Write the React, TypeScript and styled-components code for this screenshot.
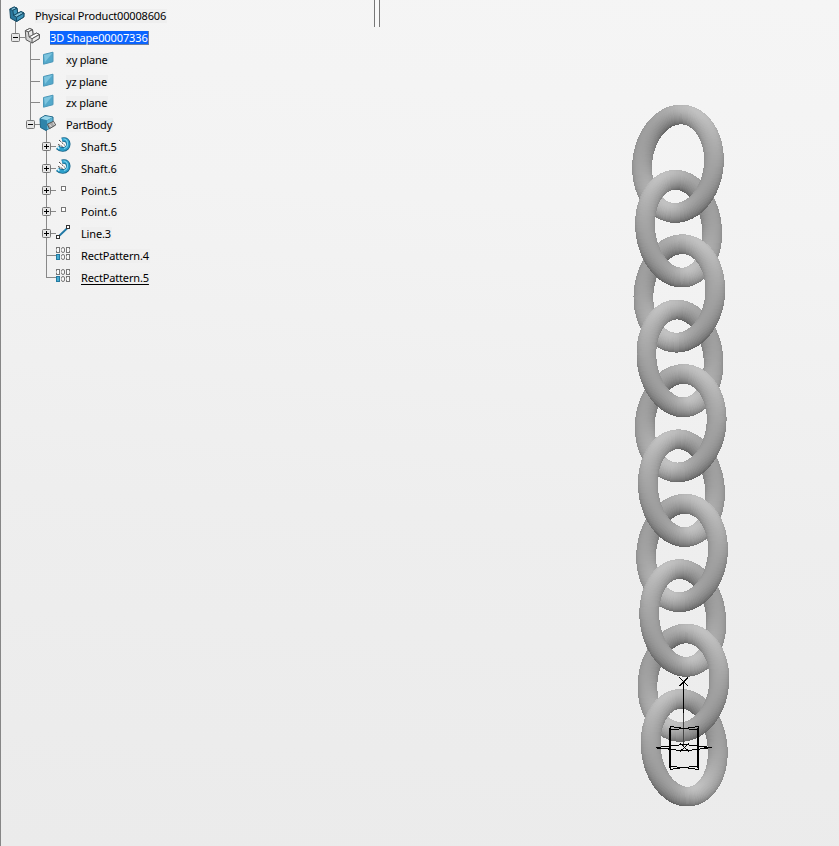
import React from 'react';
import styled, { createGlobalStyle } from 'styled-components';

const GlobalStyle = createGlobalStyle`
  html, body { margin: 0; padding: 0; overflow: hidden; }
`;

const Viewport = styled.main`
  position: relative;
  box-sizing: border-box;
  width: 839px;
  height: 846px;
  display: grid;
  grid-template-columns: 374px 5px 1fr;
  border-left: 1px solid #868686;
  overflow: hidden;
  background: linear-gradient(184deg, #f5f5f5 0%, #f3f3f3 25%, #eeeeee 60%, #ebebeb 100%);
`;

const Tree = styled.ul`
  list-style: none;
  margin: 0;
  padding: 5px 0 0;
`;

const Row = styled.li<{ $height: number }>`
  display: flex;
  align-items: flex-start;
  height: ${(p) => p.$height}px;
`;

const Gutter = styled.svg<{ $width: number }>`
  flex: none;
  display: block;
  width: ${(p) => p.$width}px;
  height: 22px;
  margin-left: -1px;
  overflow: visible;
`;

const Label = styled.span<{ $selected?: boolean; $underline?: boolean; $spacing: number }>`
  box-sizing: border-box;
  height: 14px;
  margin-top: 4px;
  padding: 0 1px 0 0;
  font: 11px/14px 'Noto Sans', 'Open Sans', sans-serif;
  letter-spacing: ${(p) => p.$spacing}px;
  white-space: nowrap;
  color: ${(p) => (p.$selected ? '#fff' : '#000')};
  background: ${(p) => (p.$selected ? '#0a64ff' : '#efefef')};
  box-shadow: ${(p) => (p.$selected ? 'inset -1px -1px 0 #6f7f9c' : 'none')};
  text-decoration: ${(p) => (p.$underline ? 'underline' : 'none')};
  text-underline-offset: 2px;
  text-decoration-skip-ink: none;
`;

const Splitter = styled.div`
  box-sizing: border-box;
  height: 27px;
  margin-left: -1px;
  border-left: 1px solid #777;
  border-right: 1px solid #777;
  background: #f8f8f8;
`;

const Scene = styled.svg`
  position: absolute;
  left: -1px;
  top: 0;
  width: 839px;
  height: 846px;
  pointer-events: none;
`;

type IconKind = 'product' | 'shape' | 'plane' | 'body' | 'shaft' | 'point' | 'line' | 'pattern';

interface Item {
  label: string;
  icon: IconKind;
  level: 0 | 1 | 2 | 3;
  height: number;
  box?: '-' | '+';
  spacing: number;
  selected?: boolean;
  underline?: boolean;
  last?: boolean;
}

const items: Item[] = [
  { label: 'Physical Product00008606', icon: 'product', level: 0, height: 22, spacing: -0.17 },
  { label: '3D Shape00007336', icon: 'shape', level: 1, height: 22, box: '-', spacing: -0.12, selected: true },
  { label: 'xy plane', icon: 'plane', level: 2, height: 22, spacing: -0.18 },
  { label: 'yz plane', icon: 'plane', level: 2, height: 21, spacing: -0.18 },
  { label: 'zx plane', icon: 'plane', level: 2, height: 22, spacing: -0.18 },
  { label: 'PartBody', icon: 'body', level: 2, height: 22, box: '-', spacing: -0.18, last: true },
  { label: 'Shaft.5', icon: 'shaft', level: 3, height: 22, box: '+', spacing: -0.02 },
  { label: 'Shaft.6', icon: 'shaft', level: 3, height: 22, box: '+', spacing: -0.02 },
  { label: 'Point.5', icon: 'point', level: 3, height: 21, box: '+', spacing: -0.02 },
  { label: 'Point.6', icon: 'point', level: 3, height: 22, box: '+', spacing: -0.02 },
  { label: 'Line.3', icon: 'line', level: 3, height: 22, box: '+', spacing: -0.15 },
  { label: 'RectPattern.4', icon: 'pattern', level: 3, height: 22, spacing: -0.15 },
  { label: 'RectPattern.5', icon: 'pattern', level: 3, height: 22, spacing: -0.15, underline: true, last: true },
];

const labelX = [35, 50, 66, 81];
const trunkX = [15, 15, 30, 46];
const stubEnd = [0, 25, 40, 56];

const Bracket = ({ front, top, side, stroke }: { front: string; top: string; side: string; stroke: string }) => (
  <g stroke={stroke} strokeWidth="1" strokeLinejoin="round">
    <path d="M.8 3.2 5.2 1 8 2.2 8.6 7.3 12 5.6 15 7 14.8 11 7.5 15.5 1.5 12.2Z" fill={front} />
    <path d="M.8 3.2 5.2 1 8 2.2 3.8 4.4Z" fill={top} />
    <path d="M3.8 4.4 8 2.2 8.6 7.3 4.6 9.5Z" fill={side} />
    <path d="M4.6 9.5 8.6 7.3 12 5.6 15 7 7.6 11.2Z" fill={top} />
    <path d="M7.6 11.2 15 7 14.8 11 7.5 15.5Z" fill={side} />
  </g>
);

function Icon({ kind }: { kind: IconKind }) {
  switch (kind) {
    case 'product':
      return (
        <g transform="translate(9 1)">
          <Bracket front="#2b789d" top="#7fbfd8" side="#3f96bb" stroke="#164b65" />
        </g>
      );
    case 'shape':
      return (
        <g transform="translate(24.5 0.5)">
          <Bracket front="#d4d4d4" top="#fff" side="#e9e9e9" stroke="#5a5a5a" />
        </g>
      );
    case 'plane':
      return (
        <g>
          <path d="M43.5 5.5 53 3.2V12.7L43.5 15.2Z" fill="#54a9cb" stroke="#4c97b8" />
          <path d="M44 6 52.5 4 45 13Z" fill="#7dc4de" />
        </g>
      );
    case 'body':
      return (
        <g strokeLinejoin="round">
          <path d="M40 4.5 45 1.5 53 3V12L46 16.5 40.5 13.5Z" fill="#2f84aa" stroke="#1c6485" />
          <path d="M40.5 4.5 45 2 52.5 3.2 47 6.3Z" fill="#9cd7ea" />
          <path d="M47 6.5 52.5 3.5V12L47 15.8Z" fill="#5db4d4" />
          <path d="M47.3 10.2 53.5 7.3 55.7 11 49.5 14.7Z" fill="#aaa" stroke="#555" />
          <path d="M49.5 10.3 51.5 13M53 8.2 54.5 11" stroke="#ddd" fill="none" />
        </g>
      );
    case 'shaft':
      return (
        <g fill="none">
          <path d="M62 3.8C70.5 1.5 70 14 62.5 13.4 60.5 13.3 58.8 12.6 57.6 11.4" stroke="#17658a" strokeWidth="4.6" />
          <path d="M62 3.8C70.5 1.5 70 14 62.5 13.4 60.5 13.3 58.8 12.6 57.6 11.4" stroke="#2d9fca" strokeWidth="3" />
          <path d="M63.5 3C69 3.5 68.5 11.5 64 12.6" stroke="#7ed2ed" strokeWidth="1.1" />
          <path d="M58.5 5 65.5 9.5" stroke="#fff" strokeWidth="2.4" />
          <path d="M59 4 65 9.5M58 8.5 62.5 10.5" stroke="#444" strokeWidth="1" strokeDasharray="2.5 1" />
          <path d="M57.2 10.2 59.2 12.8" stroke="#d9f3fb" strokeWidth="1.4" />
        </g>
      );
    case 'point':
      return <rect x="61.5" y="6.5" width="4" height="4" fill="#fff" stroke="#777" />;
    case 'line':
      return (
        <g>
          <path d="M58.5 13.5 68 4.5" stroke="#1f78a5" strokeWidth="1.8" />
          <rect x="56.5" y="12.5" width="3" height="3" fill="#fff" stroke="#333" />
          <rect x="66.5" y="2.5" width="3" height="3" fill="#fff" stroke="#333" />
        </g>
      );
    case 'pattern':
      return (
        <g fill="#fafafa" stroke="#777">
          {[56.5, 61.5, 66.5].map((x) => (
            <React.Fragment key={x}>
              <rect x={x} y="2.5" width="3" height="5" rx={x === 61.5 ? 1.5 : 0} />
              <rect
                x={x}
                y="9.5"
                width="3"
                height="5"
                rx={x === 61.5 ? 1.5 : 0}
                fill={x === 56.5 ? '#49add1' : '#fafafa'}
                stroke={x === 56.5 ? '#2379a0' : '#777'}
              />
            </React.Fragment>
          ))}
          <path d="M56 5H71M61 12H71" stroke="#f2f2f2" strokeWidth="1" strokeDasharray="1 3 2 3" />
        </g>
      );
  }
}

function TreeRow({ item }: { item: Item }) {
  const x = trunkX[item.level];
  return (
    <Row $height={item.height}>
      <Gutter $width={labelX[item.level]} viewBox={`0 0 ${labelX[item.level]} 22`}>
        <g fill="#888">
          {item.level === 0 && <rect x="15" y="16" width="1" height="6" />}
          {item.level === 1 && <rect x="15" y="0" width="1" height="6" />}
          {item.level === 1 && <rect x="30" y="16" width="1" height="6" />}
          {item.level > 1 && <rect x={x} y="0" width="1" height={item.last ? 11 : 22} />}
          {item.icon === 'body' && <rect x="46" y="15" width="1" height="7" />}
          {item.level > 0 && <rect x={x} y="10" width={stubEnd[item.level] - x} height="1" />}
        </g>
        {item.box && (
          <g>
            <rect x={x - 3.5} y="6.5" width="8" height="8" rx="1" fill="#e6e6e6" stroke="#777" />
            <rect x={x - 2} y="10" width="5" height="1" fill="#000" />
            {item.box === '+' && <rect x={x} y="8" width="1" height="5" fill="#000" />}
          </g>
        )}
        <Icon kind={item.icon} />
      </Gutter>
      <Label $selected={item.selected} $underline={item.underline} $spacing={item.spacing}>
        {item.label}
      </Label>
    </Row>
  );
}

interface Ring {
  rx: number;
  ry: number;
  tilt: number;
  /** Brightens one diagonal of the ring and darkens the other. */
  twist: number;
}

const TUBE = 9.9;
const STEPS = 120;
const BANDS = 20;

const ringA: Ring = { rx: 35.7, ry: 49.4, tilt: 7, twist: 14 };
const ringB: Ring = { rx: 33.3, ry: 49.1, tilt: -7, twist: -14 };

/** Shades a tilted torus as a fan of small facets around its centre line. */
function facets(ring: Ring) {
  const phi = (ring.tilt * Math.PI) / 180;
  const at = (t: number, s: number) => {
    const nx0 = Math.cos(t) / ring.rx;
    const ny0 = Math.sin(t) / ring.ry;
    const len = Math.hypot(nx0, ny0);
    const nx = nx0 / len;
    const ny = ny0 / len;
    const px = ring.rx * Math.cos(t) + nx * s * TUBE;
    const py = ring.ry * Math.sin(t) + ny * s * TUBE;
    const c = Math.cos(phi);
    const d = Math.sin(phi);
    return { x: px * c - py * d, y: px * d + py * c, nx: nx * c - ny * d, ny: nx * d + ny * c };
  };
  const out: { d: string; fill: string }[] = [];
  for (let i = 0; i < STEPS; i++) {
    const t0 = (i / STEPS) * Math.PI * 2;
    const t1 = ((i + 1) / STEPS) * Math.PI * 2;
    for (let j = 0; j < BANDS; j++) {
      const s0 = -1 + (2 * j) / BANDS;
      const s1 = -1 + (2 * (j + 1)) / BANDS;
      const s = (s0 + s1) / 2;
      const m = at((t0 + t1) / 2, s);
      const round = Math.pow(1 - s * s, 0.4);
      const v = Math.round(131 + 34 * round - 40 * s * m.ny - 2 * ring.twist * m.nx * m.ny);
      const p = [at(t0, s0), at(t1, s0), at(t1, s1), at(t0, s1)];
      out.push({
        d: 'M' + p.map((q) => `${q.x.toFixed(2)} ${q.y.toFixed(2)}`).join('L') + 'Z',
        fill: `rgb(${v},${v},${v})`,
      });
    }
  }
  return out;
}

const RingShape = ({ id, ring }: { id: string; ring: Ring }) => (
  <g id={id} shapeRendering="crispEdges">
    {facets(ring).map((f, i) => (
      <path key={i} d={f.d} fill={f.fill} />
    ))}
  </g>
);

const order = [0, 1, 2, 3, 4];

const placeA = (i: number) => `translate(${678 + i * 1.35} ${163.7 + i * 129.75})`;
const placeB = (i: number) => `translate(${678.6 + i * 1.4} ${228.7 + i * 129.75})`;

function Chain() {
  return (
    <g>
      <defs>
        <RingShape id="ring-a" ring={ringA} />
        <RingShape id="ring-b" ring={ringB} />
        <clipPath id="right-half">
          <rect x="0" y="-70" width="60" height="140" />
        </clipPath>
      </defs>
      {order.map((i) => (
        <use key={i} href="#ring-a" transform={placeA(i)} />
      ))}
      {order.map((i) => (
        <use key={i} href="#ring-b" transform={placeB(i)} />
      ))}
      {order.map((i) => (
        <g key={i} transform={placeA(i)}>
          <g clipPath="url(#right-half)">
            <use href="#ring-a" />
          </g>
        </g>
      ))}
    </g>
  );
}

const Sketch = () => (
  <g fill="none" stroke="#000" strokeWidth="1" shapeRendering="crispEdges">
    <path d="M679.5 677.5 688 686M688 677.5 679.5 686" />
    <path d="M683.5 682V713" />
    <path d="M683.5 713V747" stroke="#444" />
    <path d="M680 743.5 689 751.5M689 743.5 680 751.5" />
    <path d="M656 747.5 684 744.5 712 747.5 684 751Z" />
    <path d="M657 748 669 749M700 746.5 711 748" />
    <path d="M670 728V768M698 728V768" strokeWidth="2" />
    <path d="M670 726.5 684 728.5 698.5 726.5V730L684 728.5 670 730Z" />
    <path d="M670 766.5 684 767.5 698.5 766V769.5L684 767.5 670 769.5Z" />
  </g>
);

export default function App() {
  return (
    <>
      <GlobalStyle />
      <Viewport>
        <Tree>
          {items.map((item) => (
            <TreeRow key={item.label} item={item} />
          ))}
        </Tree>
        <Splitter />
        <Scene viewBox="0 0 839 846">
          <Chain />
          <Sketch />
        </Scene>
      </Viewport>
    </>
  );
}
